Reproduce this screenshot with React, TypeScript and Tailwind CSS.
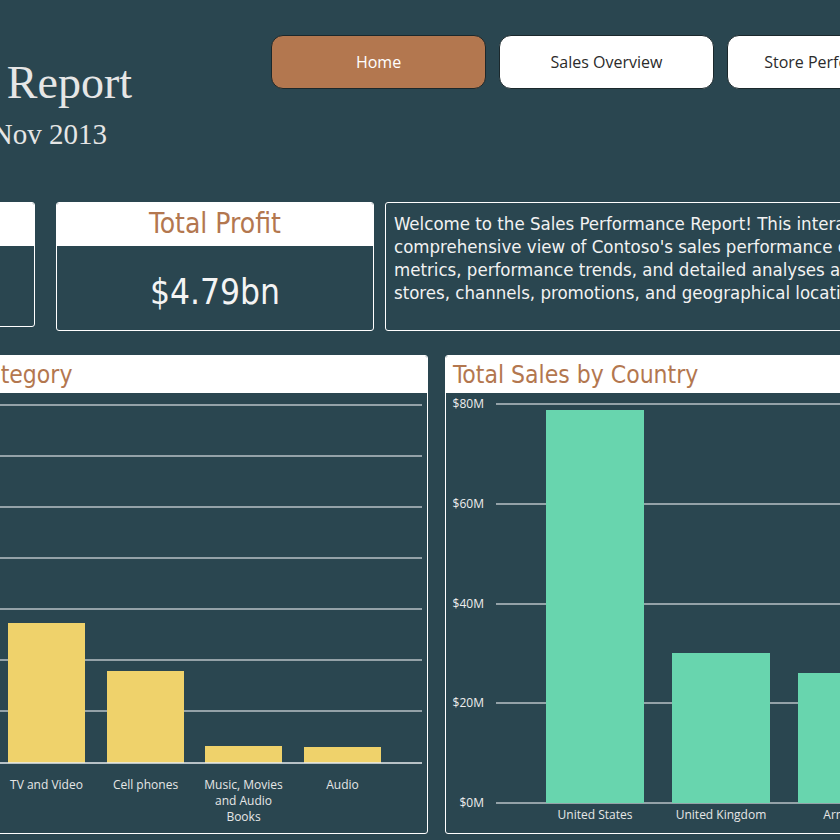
import React from 'react';

const categoryBars = [
  { label: ['Computers'], x: -90, top: 430 },
  { label: ['TV and Video'], x: 8, top: 623 },
  { label: ['Cell phones'], x: 107, top: 671 },
  { label: ['Music, Movies', 'and Audio', 'Books'], x: 205, top: 746 },
  { label: ['Audio'], x: 304, top: 747 },
];

const countryBars = [
  { label: 'United States', x: 546, top: 410 },
  { label: 'United Kingdom', x: 672, top: 653 },
  { label: 'Armenia', x: 798, top: 673 },
];

const yTicks = [
  { label: '$80M', y: 404 },
  { label: '$60M', y: 504 },
  { label: '$40M', y: 604 },
  { label: '$20M', y: 703 },
  { label: '$0M', y: 803 },
];

const navButtons = ['Home', 'Sales Overview', 'Store Performance'];

const App = () => {
  return (
    <div className="w-[840px] h-[840px] overflow-hidden bg-[#2a4650] text-white">
      {/* header */}
      <div className="flex h-[202px] items-start">
        <div className="w-[132px] shrink-0 flex flex-col items-end whitespace-nowrap font-['Liberation_Serif',serif] text-[#e6e6e6]">
          <div className="mt-[60px] text-[46px] leading-none">Sales Performance Report</div>
          <div className="mt-[14px] mr-[25px] text-[29px] leading-none">Jan 2011 - Nov 2013</div>
        </div>
        <div className="ml-[139px] mt-[35px] flex gap-[13px] shrink-0 font-['Open_Sans',sans-serif] text-[16px]">
          {navButtons.map((b, i) => (
            <div
              key={b}
              className={
                i === 0
                  ? 'w-[215px] h-[54px] shrink-0 rounded-[12px] border border-[#1b282c] bg-[#b3774f] text-white flex items-center justify-center'
                  : 'w-[215px] h-[54px] shrink-0 rounded-[12px] border border-[#1b282c] bg-white text-[#2b2b2b] flex items-center justify-center'
              }
            >
              {b}
            </div>
          ))}
        </div>
      </div>

      {/* kpi cards */}
      <div className="flex items-start h-[129px] font-['DejaVu_Sans_Condensed','DejaVu_Sans',sans-serif]">
        <div className="-ml-[265px] w-[300px] h-[125px] shrink-0 border border-white rounded-[3px] overflow-hidden flex flex-col">
          <div className="h-[43px] bg-white text-[#b3774f] text-[28px] flex items-center justify-center">Total Sales</div>
          <div className="text-center text-[35px] pt-[22px] leading-[40px]">$12.1bn</div>
        </div>
        <div className="ml-[21px] w-[318px] h-[129px] shrink-0 border border-white rounded-[3px] overflow-hidden flex flex-col">
          <div className="h-[43px] bg-white text-[#b3774f] text-[28px] leading-[42px] text-center">Total Profit</div>
          <div className="text-center text-[35px] pt-[26px] leading-[40px] text-[#f4f4f4]">$4.79bn</div>
        </div>
        <div className="ml-[11px] w-[620px] h-[129px] shrink-0 border border-white rounded-[3px] px-[8px] pt-[9px] text-[18.5px] leading-[23px] text-[#f2f2f2] whitespace-nowrap">
          <div>Welcome to the Sales Performance Report! This interactive report provides a</div>
          <div>comprehensive view of Contoso's sales performance over three years, including key</div>
          <div>metrics, performance trends, and detailed analyses across product categories,</div>
          <div>stores, channels, promotions, and geographical locations.</div>
        </div>
      </div>

      {/* charts */}
      <div className="flex mt-[24px] font-['DejaVu_Sans_Condensed','DejaVu_Sans',sans-serif]">
        <div className="-ml-[194px] w-[622px] h-[479px] shrink-0 border border-white rounded-[3px] overflow-hidden flex flex-col">
          <div className="h-[37px] bg-white text-[#b3774f] text-[24.5px] leading-[37px] pl-[7px] whitespace-nowrap">Total Sales by Category</div>
          <svg width="620" height="440" viewBox="-193 393 620 440" className="block">
            {[405, 456, 507, 558, 609, 660, 711].map((y) => (
              <line key={y} x1={-130} x2={422} y1={y} y2={y} stroke="#b9c2c6" strokeWidth={1.5} />
            ))}
            {categoryBars.map((b) => (
              <g key={b.label[0]}>
                <rect x={b.x} y={b.top} width={77} height={763 - b.top} fill="#efd26b" />
                {b.label.map((l, i) => (
                  <text
                    key={l}
                    x={b.x + 38.5}
                    y={789 + i * 16}
                    textAnchor="middle"
                    fontSize={12}
                    fill="#e6e6e6"
                    fontFamily="'Open Sans', sans-serif"
                  >
                    {l}
                  </text>
                ))}
              </g>
            ))}
            <line x1={-130} x2={422} y1={763} y2={763} stroke="#e8ecee" strokeWidth={1.5} />
          </svg>
        </div>

        <div className="ml-[17px] w-[600px] h-[479px] shrink-0 border border-white rounded-[3px] overflow-hidden flex flex-col">
          <div className="h-[37px] bg-white text-[#b3774f] text-[24.5px] leading-[37px] pl-[7px] whitespace-nowrap">Total Sales by Country</div>
          <svg width="598" height="440" viewBox="446 393 598 440" className="block">
            {yTicks.map((t) => (
              <g key={t.label}>
                <line x1={496} x2={1040} y1={t.y} y2={t.y} stroke="#b9c2c6" strokeWidth={1.5} />
                <text
                  x={484}
                  y={t.y + 4}
                  textAnchor="end"
                  fontSize={12}
                  fill="#eeeeee"
                  fontFamily="'Open Sans', sans-serif"
                >
                  {t.label}
                </text>
              </g>
            ))}
            {countryBars.map((b) => (
              <g key={b.label}>
                <rect x={b.x} y={b.top} width={98} height={803 - b.top} fill="#68d5ae" />
                <text
                  x={b.x + 49}
                  y={819}
                  textAnchor="middle"
                  fontSize={12}
                  fill="#e6e6e6"
                  fontFamily="'Open Sans', sans-serif"
                >
                  {b.label}
                </text>
              </g>
            ))}
          </svg>
        </div>
      </div>
    </div>
  );
};

export default App;
